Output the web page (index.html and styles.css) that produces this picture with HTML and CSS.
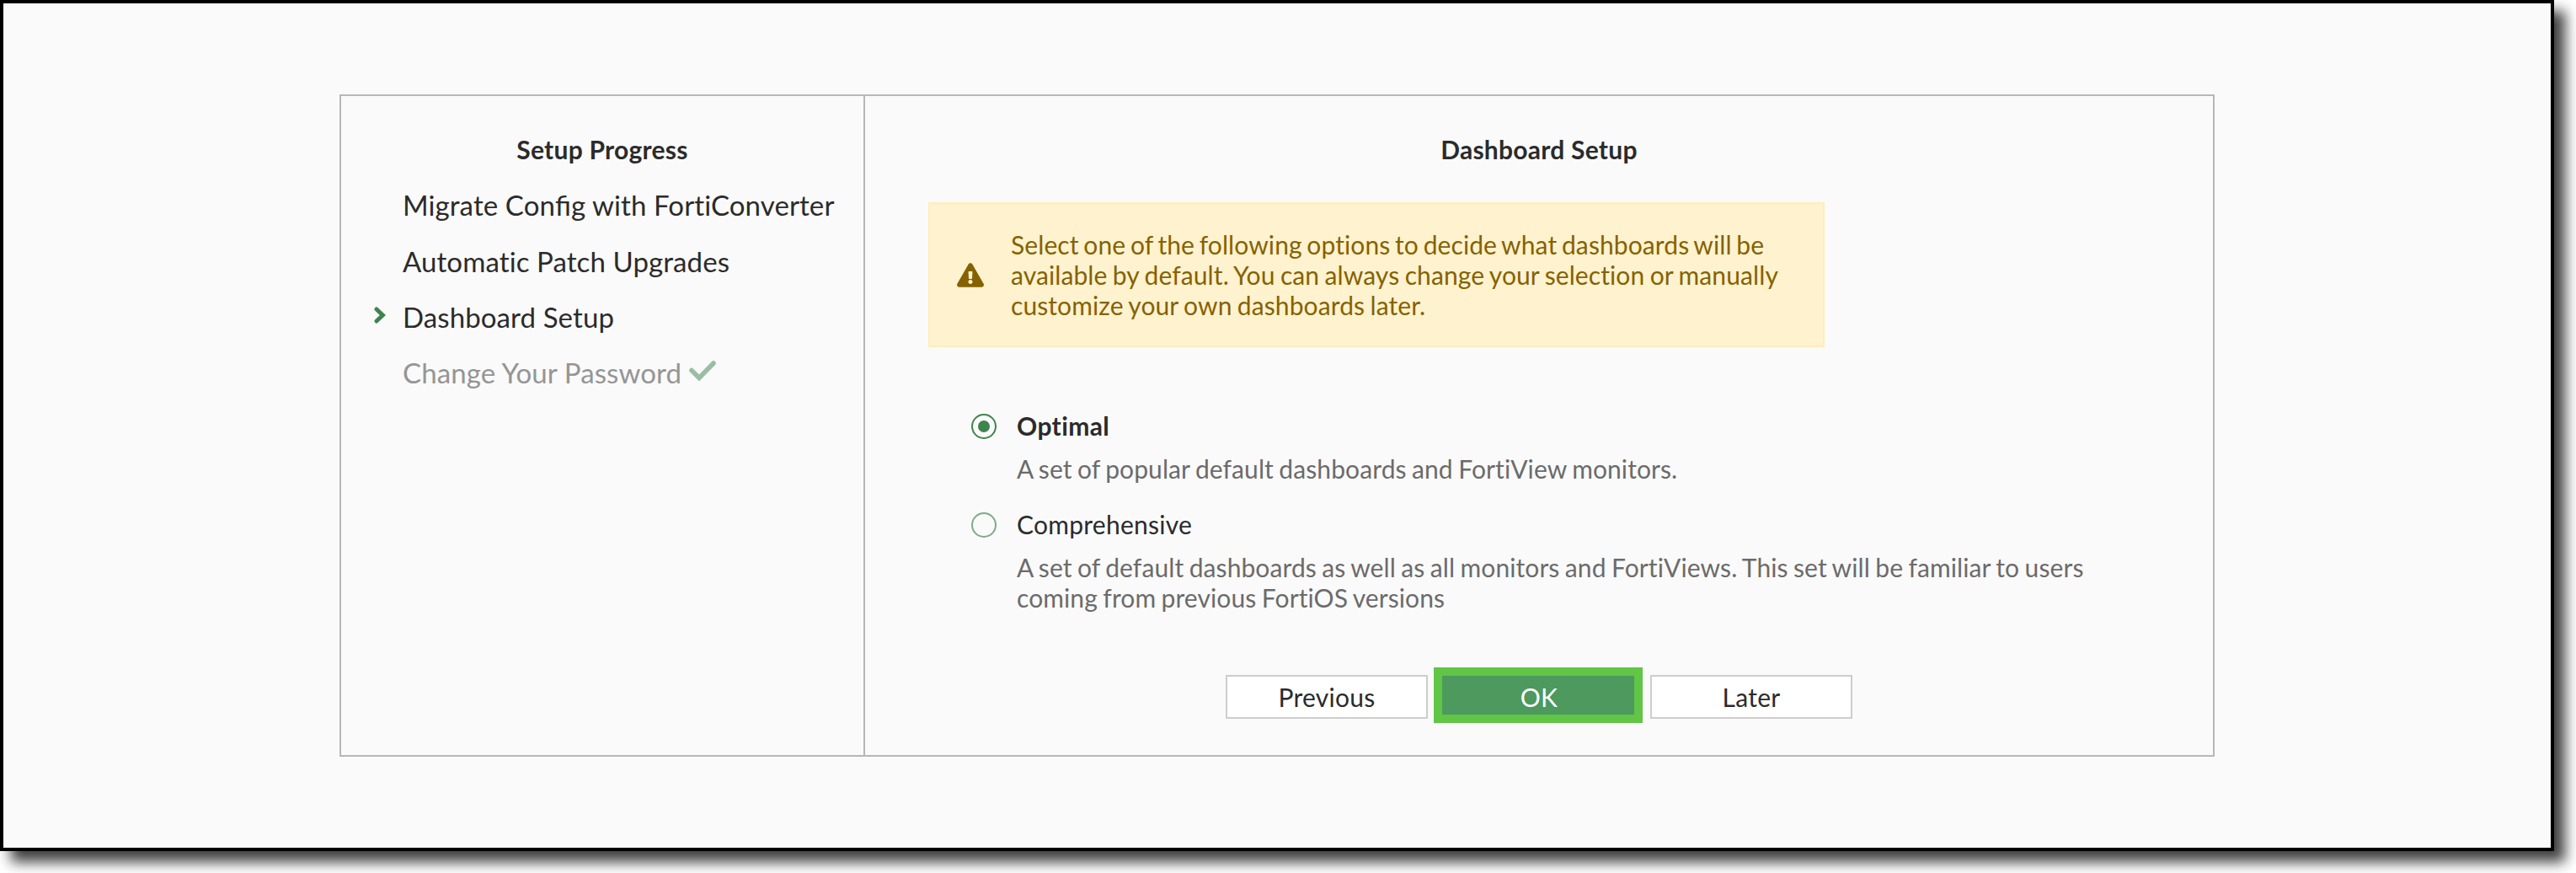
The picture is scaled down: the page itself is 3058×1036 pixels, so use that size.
FILE: index.html
```html
<!DOCTYPE html>
<html lang="en">
<head>
<meta charset="utf-8">
<title>Dashboard Setup</title>
<link rel="stylesheet" href="styles.css">
</head>
<body>
<div class="frame">
  <div class="wizard">
    <aside class="progress">
      <h2 class="title">Setup Progress</h2>
      <ul class="steps">
        <li class="step">Migrate Con<span class="lig">fi</span>g with FortiConverter</li>
        <li class="step">Automatic Patch Upgrades</li>
        <li class="step">
          <svg class="chevron" viewBox="0 0 14 20"><path d="M3 3l7.4 7L3 17" fill="none" stroke="#3f844e" stroke-width="5" stroke-linecap="round" stroke-linejoin="miter"/></svg>
          Dashboard Setup
        </li>
        <li class="step done">Change Your Password<svg class="check" viewBox="0 0 32 24"><path d="M3 11.5l9 9L29 3" fill="none" stroke="#3f844e" stroke-width="5.6" stroke-linecap="round"/></svg></li>
      </ul>
    </aside>
    <main class="content">
      <h2 class="title">Dashboard Setup</h2>
      <div class="alert">
        <svg class="warning" viewBox="0 0 576 512"><path fill="#856200" d="M569.517 440.013C587.975 472.007 564.806 512 527.94 512H48.054c-36.937 0-59.999-40.055-41.577-71.987L246.423 23.985c18.467-32.009 64.72-31.951 83.154 0l239.94 416.028z"/><path fill="#fff2cf" d="M288 354c-25.405 0-46 20.595-46 46s20.595 46 46 46 46-20.595 46-46-20.595-46-46-46zm-43.673-165.346l7.418 136c.347 6.364 5.609 11.346 11.982 11.346h48.546c6.373 0 11.635-4.982 11.982-11.346l7.418-136c.375-6.874-5.098-12.654-11.982-12.654h-63.383c-6.884 0-12.356 5.78-11.981 12.654z"/></svg>
        <p class="alert-text"><span class="tight">Select one of the following options to decide what dashboards will be</span><br>available by default. You can always change your selection or manually<br>customize your own dashboards later.</p>
      </div>
      <div class="options">
        <div class="option">
          <span class="radio selected"></span>
          <div>
            <div class="option-name strong">Optimal</div>
            <p class="description">A set of popular default dashboards and FortiView monitors.</p>
          </div>
        </div>
        <div class="option">
          <span class="radio"></span>
          <div>
            <div class="option-name">Comprehensive</div>
            <p class="description">A set of default dashboards as well as all monitors and FortiViews. This set will be familiar to users<br>coming from previous FortiOS versions</p>
          </div>
        </div>
      </div>
      <div class="actions">
        <button class="button">Previous</button>
        <button class="button primary">OK</button>
        <button class="button">Later</button>
      </div>
    </main>
  </div>
</div>
</body>
</html>
```
FILE: styles.css
```css
* { box-sizing: border-box; }
html { overflow: hidden; }
body {
  margin: 0;
  height: 1036px;
  background: #fff;
  color: #2b2b2b;
  font: 30px/36px Lato, sans-serif;
  letter-spacing: 0.25px;
}
h2, p, ul { margin: 0; padding: 0; }
.frame {
  width: 3032px;
  height: 1010px;
  padding: 108px 0 0 399px;
  border: 4px solid #000;
  background: #fafafa;
  box-shadow: 13px 13px 15px rgba(0, 0, 0, 0.75);
}
.wizard {
  display: flex;
  width: 2226px;
  height: 786px;
  border: 2px solid #b7b7b7;
}
.progress {
  width: 622px;
  padding-top: 45px;
  border-right: 2px solid #b7b7b7;
}
.title {
  font-size: 30px;
  line-height: 36px;
  font-weight: 700;
  text-align: center;
}
.steps {
  margin-top: 15.4px;
  padding-left: 73px;
  list-style: none;
  font-size: 33px;
  line-height: 66.3px;
  letter-spacing: 0.1px;
}
.step { position: relative; white-space: nowrap; }
.lig { letter-spacing: 0; }
.done { color: #959595; }
.chevron {
  position: absolute;
  left: -34px;
  top: 21px;
  width: 14px;
  height: 20px;
}
.check {
  width: 32px;
  height: 24px;
  margin-left: 9px;
  vertical-align: 3px;
  opacity: 0.5;
}
.content {
  flex: 1;
  padding-top: 45px;
}
.alert {
  display: flex;
  align-items: center;
  gap: 32px;
  width: 1064px;
  height: 172px;
  margin: 45px 0 0 75px;
  padding: 0 32px;
  border: 2px solid #ffeeba;
  background: #fff2cf;
  color: #856200;
}
.warning { width: 32px; height: 29px; flex: none; }
.alert-text, .description {
  letter-spacing: 0.1px;
  word-spacing: -1.4px;
  white-space: nowrap;
}
.tight { word-spacing: -2.1px; }
.options {
  display: grid;
  gap: 30px;
  margin: 75px 0 0 126px;
}
.option { display: flex; gap: 24px; }
.radio {
  display: flex;
  width: 30px;
  height: 30px;
  margin-top: 4px;
  border: 2px solid #7eab88;
  border-radius: 50%;
}
.selected { border-color: #3f844e; }
.selected::after {
  content: "";
  width: 14px;
  height: 14px;
  margin: auto;
  border-radius: 50%;
  background: #3f844e;
}
.strong { font-weight: 700; letter-spacing: 0.4px; }
.description { margin-top: 15px; color: #6b6b6b; }
.actions {
  display: flex;
  justify-content: center;
  gap: 12px;
  margin-top: 74px;
}
.button {
  position: relative;
  width: 240px;
  height: 52px;
  padding: 0;
  border: 2px solid #cdcdcd;
  background: #fff;
  color: #2b2b2b;
  font: inherit;
  letter-spacing: inherit;
}
.primary { border-color: #4d995e; background: #4d995e; color: #fff; }
.primary::after {
  content: "";
  position: absolute;
  inset: -11px -5px -7px -7px;
  border: 10px solid #61c546;
}
```
